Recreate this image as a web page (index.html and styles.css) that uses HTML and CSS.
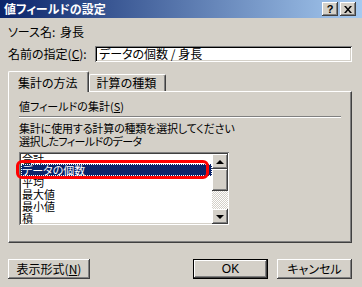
FILE: index.html
```html
<!DOCTYPE html>
<html lang="ja">
<head>
    <meta charset="UTF-8">
    <title>値フィールドの設定</title>
    <link rel="stylesheet" href="styles.css">
</head>
<body>
    <div class="dialog">
        <!-- Title bar -->
        <div class="titlebar">
            <span class="title">値フィールドの設定</span>
            <div class="title-buttons">
                <button class="cap-btn">?</button>
                <button class="cap-btn">
                    <svg width="8" height="7" viewBox="0 0 8 7"><path d="M0 0h2l2 2.5L6 0h2L5 3.5 8 7H6L4 4.5 2 7H0l3-3.5z" fill="#000"/></svg>
                </button>
            </div>
        </div>

        <div class="content">
            <div class="row source-row">
                <span class="source-label">ソース名:</span>
                <span>身長</span>
            </div>
            <div class="row name-row">
                <span class="name-label">名前の指定(<u>C</u>):</span>
                <div class="field">データの個数 / 身長</div>
            </div>

            <!-- Tabs -->
            <div class="tabs">
                <div class="tab active">集計の方法</div>
                <div class="tab">計算の種類</div>
            </div>
            <div class="panel">
                <div class="group-label">値フィールドの集計(<u>S</u>)</div>
                <div class="groove"></div>
                <p class="hint long">集計に使用する計算の種類を選択してください</p>
                <p class="hint">選択したフィールドのデータ</p>

                <div class="listbox">
                    <ul class="items">
                        <li class="first">合計</li>
                        <li class="selected">データの個数</li>
                        <li>平均</li>
                        <li>最大値</li>
                        <li>最小値</li>
                        <li>積</li>
                    </ul>
                    <div class="scrollbar">
                        <div class="sb-btn"><span class="arrow up"></span></div>
                        <div class="sb-thumb"></div>
                        <div class="sb-track"></div>
                        <div class="sb-btn"><span class="arrow down"></span></div>
                    </div>
                    <div class="marker"></div>
                </div>
            </div>

            <!-- Bottom buttons -->
            <div class="actions">
                <button class="btn">表示形式(<u>N</u>)</button>
                <div class="right-buttons">
                    <button class="btn default">OK</button>
                    <button class="btn">キャンセル</button>
                </div>
            </div>
        </div>
    </div>
</body>
</html>
```

FILE: styles.css
```css
* {
    margin: 0;
    padding: 0;
    box-sizing: border-box;
}

body {
    background-color: #d4d0c8;
    font-family: "Noto Sans CJK JP", "Noto Sans", sans-serif;
    font-size: 12px;
    font-feature-settings: "palt";
    color: #000;
}

button {
    font-family: inherit;
    font-size: 12px;
    font-feature-settings: "palt";
    color: #000;
    border: none;
    background-color: #d4d0c8;
}

.dialog {
    width: 362px;
    height: 287px;
    overflow: hidden;
}

.titlebar {
    height: 18px;
    display: flex;
    align-items: center;
    justify-content: space-between;
    padding: 0 6px 0 4px;
    background: linear-gradient(to right, #0a246a, #a6caf0);
}

.title {
    color: #fff;
    font-weight: bold;
    font-size: 12px;
    line-height: 14px;
}

.title-buttons {
    display: flex;
    gap: 2px;
}

.cap-btn {
    width: 16px;
    height: 14px;
    display: flex;
    align-items: center;
    justify-content: center;
    font-family: "Liberation Sans", sans-serif;
    font-weight: bold;
    font-size: 11px;
    line-height: 14px;
    box-shadow: inset -1px -1px #404040, inset 1px 1px #fff, inset -2px -2px #808080;
}

.content {
    padding: 0 10px 0 8px;
}

.row {
    display: flex;
    align-items: center;
    line-height: 16px;
}

.source-row {
    margin-top: 6px;
    height: 16px;
}

.source-label {
    width: 52px;
}

.name-row {
    margin-top: 6px;
    height: 16px;
}

.name-label {
    width: 87px;
}

.field {
    flex: 1;
    height: 16px;
    background-color: #fff;
    padding: 0 4px;
    line-height: 16px;
    box-shadow: inset 1px 1px #808080, inset -1px -1px #fff, inset 2px 2px #000, inset -2px -2px #d4d0c8;
}

.tabs {
    display: flex;
    align-items: flex-end;
    margin-top: 9px;
    height: 20px;
    position: relative;
    z-index: 1;
}

.tab {
    height: 17px;
    line-height: 16px;
    padding: 0 9px 0 7px;
    border-top: 1px solid #fff;
    border-left: 1px solid #fff;
    border-right: 1px solid #404040;
    border-radius: 2px 2px 0 0;
    box-shadow: inset -1px 0 #808080;
}

.tab.active {
    height: 21px;
    margin-bottom: -1px;
    padding: 3px 10px 0 9px;
    background-color: #d4d0c8;
}

.panel {
    height: 152px;
    padding: 6px 10px 0 10px;
    font-size: 11px;
    border-top: 1px solid #fff;
    border-left: 1px solid #fff;
    border-right: 1px solid #404040;
    border-bottom: 1px solid #404040;
    box-shadow: inset -1px -1px #808080;
}

.group-label {
    line-height: 16px;
}

.groove {
    height: 2px;
    margin: 2px 0 4px 0;
    border-top: 1px solid #808080;
    border-bottom: 1px solid #fff;
}

.hint {
    line-height: 13px;
    letter-spacing: -0.6px;
}

.hint.long {
    letter-spacing: -0.15px;
}

.listbox {
    position: relative;
    margin-top: 4px;
    width: 210px;
    height: 73px;
    display: flex;
    background-color: #fff;
    padding: 2px 1px 1px 2px;
    box-shadow: inset 1px 1px #808080, inset -1px -1px #fff, inset 2px 2px #404040, inset -2px -2px #d4d0c8;
}

.items {
    list-style: none;
    flex: 1;
    overflow: hidden;
}

.items li {
    height: 12px;
    line-height: 12px;
    padding-left: 1px;
}

.items li.first {
    margin-top: -2px;
}

.items li.selected {
    background-color: #0a246a;
    color: #fff;
    outline: 1px dotted #fff;
    outline-offset: -1px;
}

.scrollbar {
    width: 16px;
    display: flex;
    flex-direction: column;
}

.sb-btn {
    height: 15px;
    display: flex;
    align-items: center;
    justify-content: center;
    background-color: #d4d0c8;
    box-shadow: inset -1px -1px #404040, inset 1px 1px #fff, inset -2px -2px #808080;
}

.sb-thumb {
    height: 22px;
    background-color: #d4d0c8;
    box-shadow: inset -1px -1px #404040, inset 1px 1px #fff, inset -2px -2px #808080;
}

.sb-track {
    flex: 1;
    background: repeating-conic-gradient(#fff 0 25%, #d4d0c8 0 50%) 0 0 / 2px 2px;
}

.arrow {
    width: 0;
    height: 0;
    border-left: 4px solid transparent;
    border-right: 4px solid transparent;
}

.arrow.up {
    border-bottom: 4px solid #000;
}

.arrow.down {
    border-top: 4px solid #000;
}

.marker {
    position: absolute;
    left: -3px;
    top: 8px;
    width: 193px;
    height: 19px;
    border: 3px solid #f00;
    border-radius: 6px;
}

.actions {
    display: flex;
    justify-content: space-between;
    margin-top: 16px;
}

.right-buttons {
    display: flex;
    gap: 9px;
}

.btn {
    width: 75px;
    height: 20px;
    line-height: 18px;
    box-shadow: inset -1px -1px #404040, inset 1px 1px #fff, inset -2px -2px #808080;
}

.btn:first-child {
    width: 82px;
}

.right-buttons .btn {
    width: 75px;
}

.btn.default {
    border: 1px solid #000;
    font-family: "Liberation Sans", sans-serif;
}
```
